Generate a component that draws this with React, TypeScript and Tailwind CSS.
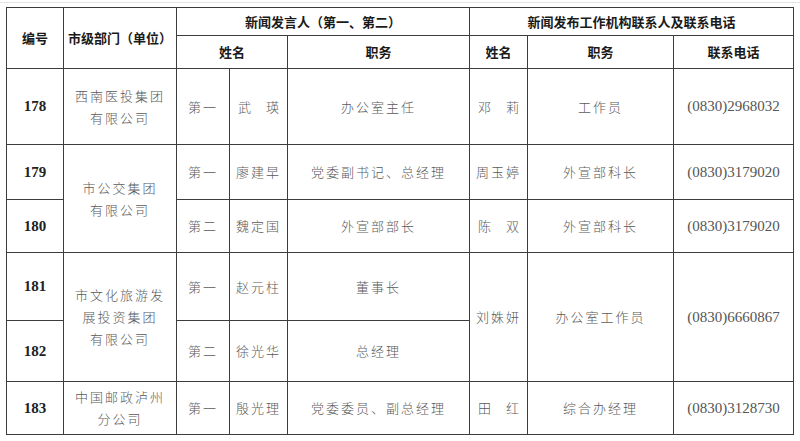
const cell = 'border border-[#3c3c3c] p-0 text-center align-middle';
const head = `${cell} text-[13px] font-bold text-[#1a1a1a]`;
const body = `${cell} text-[13px] font-light tracking-[2px] text-[#5a5a5a] leading-[22px]`;
const num = `${cell} text-[15px] font-bold text-[#222] font-['Liberation_Serif',serif]`;
const phone = `${cell} text-[15px] text-[#555] font-['Liberation_Serif',serif]`;

function Lines({ lines }: { lines: string[] }) {
  return (
    <>
      {lines.map((l) => (
        <div key={l}>{l}</div>
      ))}
    </>
  );
}

// two-character names are spread apart in the original
function Spread({ a, b }: { a: string; b: string }) {
  return (
    <div className="flex justify-center gap-[15px] whitespace-nowrap tracking-normal">
      <span>{a}</span>
      <span>{b}</span>
    </div>
  );
}

export default function App() {
  return (
    <div className="w-[800px] h-[441px] bg-white font-['Noto_Sans_CJK_SC',sans-serif] overflow-hidden">
      <div className="h-[2px]" />
      <div className="h-px bg-[#e4e4e4]" />
      <table className="ml-[6px] mt-[4px] w-[787px] table-fixed border-collapse">
        <colgroup>
          <col className="w-[57px]" />
          <col className="w-[113px]" />
          <col className="w-[53px]" />
          <col className="w-[58px]" />
          <col className="w-[182px]" />
          <col className="w-[58px]" />
          <col className="w-[146px]" />
          <col className="w-[120px]" />
        </colgroup>
        <thead>
          <tr className="h-[28px]">
            <th rowSpan={2} className={head}>编号</th>
            <th rowSpan={2} className={head}>市级部门（单位）</th>
            <th colSpan={3} className={head}>新闻发言人（第一、第二）</th>
            <th colSpan={3} className={head}>新闻发布工作机构联系人及联系电话</th>
          </tr>
          <tr className="h-[33px]">
            <th colSpan={2} className={head}>姓名</th>
            <th className={head}>职务</th>
            <th className={head}>姓名</th>
            <th className={head}>职务</th>
            <th className={head}>联系电话</th>
          </tr>
        </thead>
        <tbody>
          <tr className="h-[76px]">
            <td className={num}>178</td>
            <td className={body}><Lines lines={['西南医投集团', '有限公司']} /></td>
            <td className={body}>第一</td>
            <td className={body}><Spread a="武" b="瑛" /></td>
            <td className={body}>办公室主任</td>
            <td className={body}><Spread a="邓" b="莉" /></td>
            <td className={body}>工作员</td>
            <td className={phone}>(0830)2968032</td>
          </tr>
          <tr className="h-[55px]">
            <td className={num}>179</td>
            <td rowSpan={2} className={body}><Lines lines={['市公交集团', '有限公司']} /></td>
            <td className={body}>第一</td>
            <td className={body}>廖建早</td>
            <td className={body}>党委副书记、总经理</td>
            <td className={body}>周玉婷</td>
            <td className={body}>外宣部科长</td>
            <td className={phone}>(0830)3179020</td>
          </tr>
          <tr className="h-[53px]">
            <td className={num}>180</td>
            <td className={body}>第二</td>
            <td className={body}>魏定国</td>
            <td className={body}>外宣部部长</td>
            <td className={body}><Spread a="陈" b="双" /></td>
            <td className={body}>外宣部科长</td>
            <td className={phone}>(0830)3179020</td>
          </tr>
          <tr className="h-[68px]">
            <td className={num}>181</td>
            <td rowSpan={2} className={body}><Lines lines={['市文化旅游发', '展投资集团', '有限公司']} /></td>
            <td className={body}>第一</td>
            <td className={body}>赵元柱</td>
            <td className={body}>董事长</td>
            <td rowSpan={2} className={body}>刘姝妍</td>
            <td rowSpan={2} className={body}>办公室工作员</td>
            <td rowSpan={2} className={phone}>(0830)6660867</td>
          </tr>
          <tr className="h-[61px]">
            <td className={num}>182</td>
            <td className={body}>第二</td>
            <td className={body}>徐光华</td>
            <td className={body}>总经理</td>
          </tr>
          <tr className="h-[53px]">
            <td className={num}>183</td>
            <td className={body}><Lines lines={['中国邮政泸州', '分公司']} /></td>
            <td className={body}>第一</td>
            <td className={body}>殷光理</td>
            <td className={body}>党委委员、副总经理</td>
            <td className={body}><Spread a="田" b="红" /></td>
            <td className={body}>综合办经理</td>
            <td className={phone}>(0830)3128730</td>
          </tr>
        </tbody>
      </table>
    </div>
  );
}
